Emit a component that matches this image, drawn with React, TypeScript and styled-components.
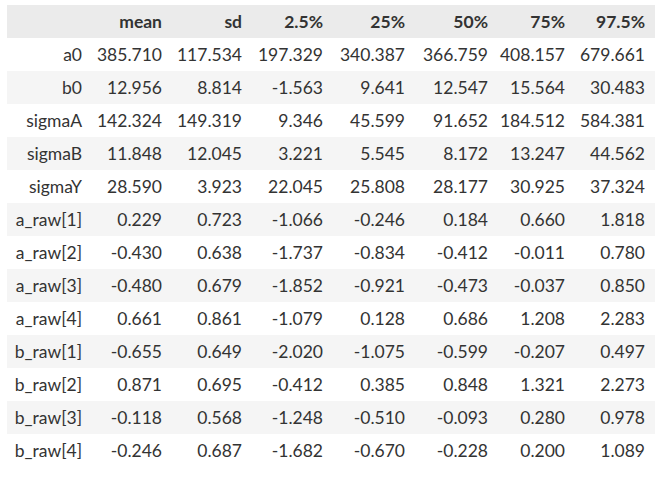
import styled, { createGlobalStyle } from 'styled-components'

const GlobalStyle = createGlobalStyle`
  html, body {
    margin: 0;
    padding: 0;
    background: #ffffff;
  }
`

const Page = styled.div`
  padding: 5px 5px 0 7px;
  font-family: Lato, 'Open Sans', sans-serif;
  font-size: 17.5px;
  color: #333333;
`

const Table = styled.table`
  width: 648px;
  table-layout: fixed;
  border-collapse: collapse;
  border-spacing: 0;
`

const HeadRow = styled.tr`
  background: #ebebeb;
`

const Row = styled.tr<{ $striped: boolean }>`
  background: ${(p) => (p.$striped ? '#f5f5f5' : '#ffffff')};
`

const HeadCell = styled.th`
  height: 33px;
  padding: 0 10px 0 0;
  text-align: right;
  font-weight: 700;
  white-space: nowrap;
`

const IndexCell = styled.th`
  height: 33px;
  padding: 0 10px 0 0;
  text-align: right;
  font-weight: 400;
  white-space: nowrap;
`

const Cell = styled.td`
  height: 33px;
  padding: 0 10px 0 0;
  text-align: right;
  white-space: nowrap;
`

const columns = ['mean', 'sd', '2.5%', '25%', '50%', '75%', '97.5%']
const widths = [85, 80, 80, 81, 82, 83, 77, 80]

const rows: [string, string[]][] = [
  ['a0', ['385.710', '117.534', '197.329', '340.387', '366.759', '408.157', '679.661']],
  ['b0', ['12.956', '8.814', '-1.563', '9.641', '12.547', '15.564', '30.483']],
  ['sigmaA', ['142.324', '149.319', '9.346', '45.599', '91.652', '184.512', '584.381']],
  ['sigmaB', ['11.848', '12.045', '3.221', '5.545', '8.172', '13.247', '44.562']],
  ['sigmaY', ['28.590', '3.923', '22.045', '25.808', '28.177', '30.925', '37.324']],
  ['a_raw[1]', ['0.229', '0.723', '-1.066', '-0.246', '0.184', '0.660', '1.818']],
  ['a_raw[2]', ['-0.430', '0.638', '-1.737', '-0.834', '-0.412', '-0.011', '0.780']],
  ['a_raw[3]', ['-0.480', '0.679', '-1.852', '-0.921', '-0.473', '-0.037', '0.850']],
  ['a_raw[4]', ['0.661', '0.861', '-1.079', '0.128', '0.686', '1.208', '2.283']],
  ['b_raw[1]', ['-0.655', '0.649', '-2.020', '-1.075', '-0.599', '-0.207', '0.497']],
  ['b_raw[2]', ['0.871', '0.695', '-0.412', '0.385', '0.848', '1.321', '2.273']],
  ['b_raw[3]', ['-0.118', '0.568', '-1.248', '-0.510', '-0.093', '0.280', '0.978']],
  ['b_raw[4]', ['-0.246', '0.687', '-1.682', '-0.670', '-0.228', '0.200', '1.089']]
]

const App = () => {
  return (
    <>
      <GlobalStyle />
      <Page>
        <Table>
          <colgroup>
            {widths.map((w, i) => (
              <col key={i} style={{ width: w }} />
            ))}
          </colgroup>
          <thead>
            <HeadRow>
              <HeadCell />
              {columns.map((c) => (
                <HeadCell key={c}>{c}</HeadCell>
              ))}
            </HeadRow>
          </thead>
          <tbody>
            {rows.map(([name, values], i) => (
              <Row key={name} $striped={i % 2 === 1}>
                <IndexCell>{name}</IndexCell>
                {values.map((v, j) => (
                  <Cell key={j}>{v}</Cell>
                ))}
              </Row>
            ))}
          </tbody>
        </Table>
      </Page>
    </>
  )
}

export default App
